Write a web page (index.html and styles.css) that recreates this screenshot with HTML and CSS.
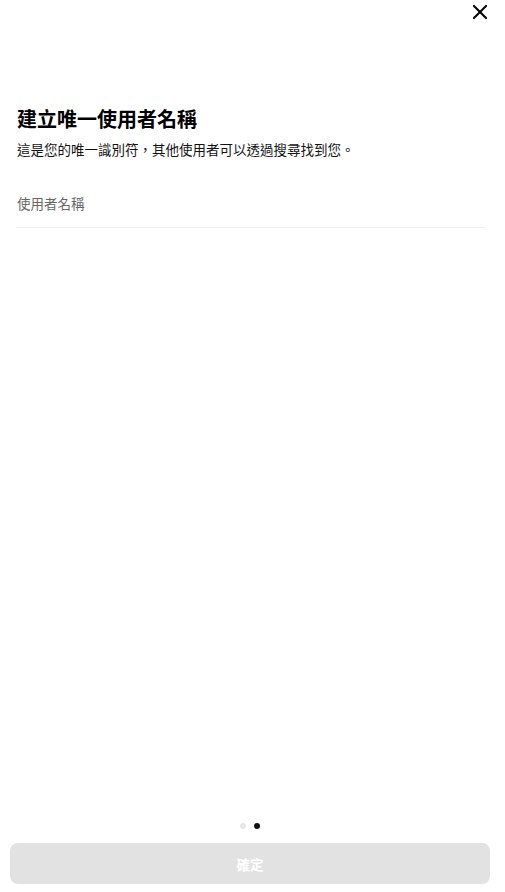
FILE: index.html
```html
<!DOCTYPE html>
<html>
  <head>
    <meta charset="UTF-8">
    <link rel="stylesheet" href="styles.css">
  </head>
  <body>
    <div class="top_bar">
      <button class="close_btn" aria-label="關閉">
        <svg width="14" height="14" viewBox="0 0 14 14">
          <path d="M1 1 L13 13 M13 1 L1 13" stroke="#000" stroke-width="2" stroke-linecap="square" fill="none"/>
        </svg>
      </button>
    </div>

    <div class="content">
      <h1 class="title">建立唯一使用者名稱</h1>
      <p class="subtitle">這是您的唯一識別符，其他使用者可以透過搜尋找到您。</p>
      <input type="text" class="name_input" placeholder="使用者名稱">
    </div>

    <div class="footer">
      <div class="dots">
        <span class="dot"></span>
        <span class="dot active"></span>
      </div>
      <button class="confirm_btn" disabled>確定</button>
    </div>
  </body>
</html>
```

FILE: styles.css
```css
html, body {
  height: 100%;
}

body {
  margin: 0;
  display: flex;
  flex-direction: column;
  background: #fff;
  color: #000;
  font-family: "Noto Sans CJK TC", "Noto Sans", sans-serif;
}

.top_bar {
  height: 105px;
  display: flex;
  justify-content: flex-end;
  align-items: flex-start;
  padding: 5px 18px 0 0;
  box-sizing: border-box;
}

.close_btn {
  border: none;
  background: none;
  padding: 0;
  width: 14px;
  height: 14px;
  cursor: pointer;
}

.close_btn svg {
  display: block;
}

.content {
  flex: 1;
  padding: 0 20px 0 17px;
}

.title {
  margin: 0;
  font-size: 20px;
  line-height: 28px;
  font-weight: 700;
}

.subtitle {
  margin: 6px 0 0;
  font-size: 13.5px;
  line-height: 20px;
  color: #111;
}

.name_input {
  display: block;
  box-sizing: border-box;
  width: calc(100% + 1px);
  margin: 24px 0 0 -1px;
  height: 45px;
  padding: 0 0 4px 1px;
  border: none;
  border-bottom: 1px solid #efefef;
  outline: none;
  font-family: inherit;
  font-size: 13.5px;
  color: #000;
  background: transparent;
}

.name_input::placeholder {
  color: #666;
}

.footer {
  padding: 0 15px 8px 10px;
  display: flex;
  flex-direction: column;
  align-items: stretch;
}

.dots {
  display: flex;
  justify-content: center;
  gap: 8px;
  margin: 0 0 14px;
}

.dot {
  width: 6px;
  height: 6px;
  border-radius: 50%;
  background: #e6e6e6;
}

.dot.active {
  background: #111;
}

.confirm_btn {
  height: 41px;
  border: none;
  border-radius: 8px;
  background: #e2e2e2;
  color: #fff;
  font-family: inherit;
  font-size: 13.5px;
  font-weight: 700;
}
```
